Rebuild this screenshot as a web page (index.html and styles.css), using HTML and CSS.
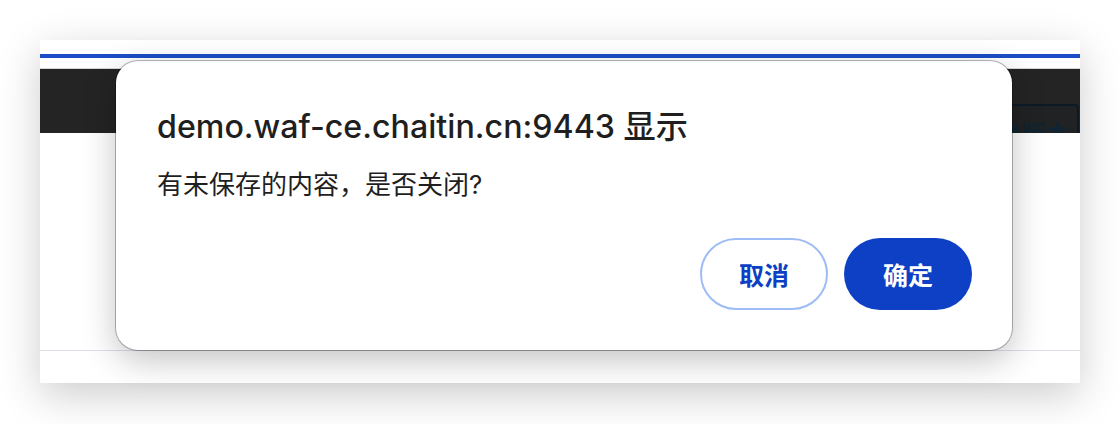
FILE: index.html
```html
<!DOCTYPE html>
<html lang="zh-CN">
<head>
<meta charset="utf-8">
<title>demo.waf-ce.chaitin.cn:9443</title>
<link rel="stylesheet" href="styles.css">
</head>
<body>
<div class="stage">
  <div class="window">
    <div class="top-gap"></div>
    <div class="blue-bar"></div>
    <div class="mid-gap"></div>
    <div class="dark-bar">
      <div class="dark-box"><span>切换版本</span></div>
    </div>
    <div class="content"></div>
    <div class="divider"></div>
    <div class="footer"></div>

    <div class="dialog">
      <h1 class="dialog-title">demo.waf-ce.chaitin.cn:9443 显示</h1>
      <p class="dialog-msg">有未保存的内容，是否关闭?</p>
      <div class="dialog-actions">
        <button class="btn btn-cancel">取消</button>
        <button class="btn btn-ok">确定</button>
      </div>
    </div>
  </div>
</div>
</body>
</html>
```

FILE: styles.css
```css
* { box-sizing: border-box; }
html, body {
  margin: 0;
  padding: 0;
  background: #ffffff;
  width: 1120px;
  height: 424px;
  overflow: hidden;
  font-family: Inter, "Noto Sans CJK SC", sans-serif;
}
.stage {
  padding: 40px 40px 0 40px;
}
.window {
  position: relative;
  width: 1040px;
  height: 343px;
  background: #ffffff;
  box-shadow: 0 12px 40px rgba(0, 0, 0, 0.20);
  display: flex;
  flex-direction: column;
}
.top-gap { height: 14px; }
.blue-bar { height: 4px; background: #1a4dc6; }
.mid-gap { height: 10px; border-bottom: 1px solid #d6d6d6; box-sizing: content-box; }
.dark-bar {
  height: 64px;
  background: #242424;
  display: flex;
  justify-content: flex-end;
  padding: 35px 1px 0 0;
  overflow: hidden;
}
.dark-box {
  width: 110px;
  height: 60px;
  border: 2px solid #0d1a26;
  border-radius: 4px;
  background: #202224;
  display: flex;
  justify-content: flex-end;
  padding: 14px 8px 0 0;
  font-size: 24px;
  font-weight: 700;
  line-height: 30px;
  color: #102431;
}
.content { height: 217px; }
.divider { height: 1px; background: #dde0ea; }
.footer { height: 32px; }

.dialog {
  position: absolute;
  left: 76px;
  top: 21px;
  width: 896px;
  height: 289px;
  background: #ffffff;
  border-radius: 22px;
  box-shadow: 0 0 0 1px rgba(0, 0, 0, 0.28), 0 10px 34px rgba(0, 0, 0, 0.24);
  padding: 46px 40px 40px 41px;
  display: flex;
  flex-direction: column;
}
.dialog-title {
  margin: 0;
  font-size: 32.2px;
  font-weight: 500;
  line-height: 40px;
  color: #1f1f1f;
  letter-spacing: 0;
}
.dialog-msg {
  margin: 21px 0 0 0;
  font-size: 26px;
  line-height: 34px;
  color: #1f1f1f;
}
.dialog-actions {
  margin-top: auto;
  display: flex;
  justify-content: flex-end;
  gap: 16px;
}
.btn {
  width: 128px;
  height: 72px;
  border-radius: 36px;
  font-family: "Noto Sans CJK SC", sans-serif;
  font-size: 25px;
  font-weight: 700;
  cursor: pointer;
}
.btn-cancel {
  background: #ffffff;
  border: 2px solid #9ebcf5;
  color: #0d3fc4;
}
.btn-ok {
  background: #0d40c5;
  border: none;
  color: #ffffff;
}
```
